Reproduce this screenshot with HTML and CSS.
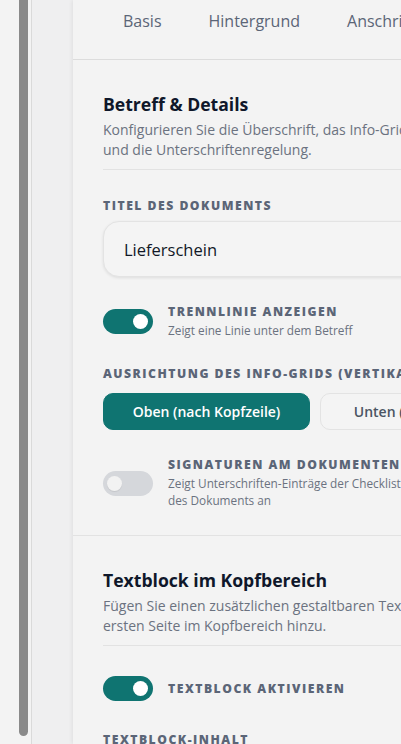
FILE: index.html
```html
<!DOCTYPE html>
<html lang="de">
<head>
<meta charset="utf-8">
<title>Betreff &amp; Details</title>
<link rel="stylesheet" href="styles.css">
</head>
<body>
<div class="app">
  <div class="rail"><div class="thumb"></div></div>
  <div class="gutter"></div>
  <main class="panel">
    <nav class="tabs">
      <span class="tab">Basis</span>
      <span class="tab">Hintergrund</span>
      <span class="tab">Anschrift</span>
    </nav>
    <section class="section section--bordered">
      <header class="section-head">
        <h2 class="section-title">Betreff &amp; Details</h2>
        <p class="section-desc">Konfigurieren Sie die Überschrift, das Info-Grid<br>und die Unterschriftenregelung.</p>
      </header>
      <div class="section-body">
        <div class="field">
          <div class="label">Titel des Dokuments</div>
          <div class="input">Lieferschein</div>
        </div>
        <div class="toggle-row">
          <span class="toggle toggle--on"><span class="knob"></span></span>
          <div class="toggle-text">
            <div class="label">Trennlinie anzeigen</div>
            <div class="hint">Zeigt eine Linie unter dem Betreff</div>
          </div>
        </div>
        <div class="field field--seg">
          <div class="label">Ausrichtung des Info-Grids (vertikal)</div>
          <div class="segmented">
            <span class="seg seg--active">Oben (nach Kopfzeile)</span>
            <span class="seg">Unten (nach Tabelle)</span>
          </div>
        </div>
        <div class="toggle-row">
          <span class="toggle"><span class="knob"></span></span>
          <div class="toggle-text">
            <div class="label">Signaturen am Dokumentenende</div>
            <div class="hint">Zeigt Unterschriften-Einträge der Checkliste am Ende<br>des Dokuments an</div>
          </div>
        </div>
      </div>
    </section>
    <section class="section">
      <header class="section-head">
        <h2 class="section-title">Textblock im Kopfbereich</h2>
        <p class="section-desc">Fügen Sie einen zusätzlichen gestaltbaren Textblock auf der<br>ersten Seite im Kopfbereich hinzu.</p>
      </header>
      <div class="section-body">
        <div class="toggle-row toggle-row--single">
          <span class="toggle toggle--on"><span class="knob"></span></span>
          <div class="toggle-text">
            <div class="label">Textblock aktivieren</div>
          </div>
        </div>
        <div class="field">
          <div class="label">Textblock-Inhalt</div>
        </div>
      </div>
    </section>
  </main>
</div>
</body>
</html>
```
FILE: styles.css
```css
* { box-sizing: border-box; }
html, body { margin: 0; padding: 0; }
body {
  width: 401px;
  height: 744px;
  overflow: hidden;
  background: #f3f3f3;
  font-family: "Open Sans", "Noto Sans", sans-serif;
  color: #111827;
}
.app { display: flex; height: 744px; }
.rail {
  width: 32px;
  flex-shrink: 0;
  padding-left: 19px;
  border-right: 1px solid #dadada;
  background: #f3f3f3;
}
.thumb {
  width: 9px;
  height: 736px;
  background: #8a8a8a;
  border-radius: 0 0 5px 5px;
}
.gutter { width: 41px; flex-shrink: 0; background: #efeff0; }
.panel {
  width: 484px;
  flex-shrink: 0;
  background: #f3f3f3;
  box-shadow: -1px 0 4px rgba(0,0,0,0.07);
}
.tabs {
  height: 60px;
  display: flex;
  align-items: flex-start;
  gap: 47px;
  padding: 7px 0 0 50px;
  border-bottom: 1px solid #dcdcdc;
}
.tab {
  font-size: 16px;
  line-height: 28px;
  font-weight: 500;
  color: #5b6577;
  white-space: nowrap;
}
.section { padding: 32px 0 0 30px; }
.section--bordered { border-bottom: 1px solid #e2e2e2; }
.section-head {
  width: 424px;
  padding-bottom: 9px;
  border-bottom: 1px solid #e2e2e2;
}
.section-title {
  margin: 0 0 4px;
  font-size: 17.6px;
  line-height: 24px;
  font-weight: 700;
  color: #0f172a;
}
.section-desc {
  margin: 0;
  font-size: 14px;
  line-height: 20px;
  color: #6b7280;
  white-space: nowrap;
}
.section-body {
  width: 424px;
  display: flex;
  flex-direction: column;
  gap: 27px;
  padding: 28px 0 26px;
}
.label {
  font-size: 12.2px;
  line-height: 16px;
  font-weight: 800;
  letter-spacing: 1.5px;
  text-transform: uppercase;
  color: #5b6577;
  white-space: nowrap;
}
.field { display: flex; flex-direction: column; gap: 7px; }
.field--seg { gap: 11px; }
.input {
  height: 56px;
  display: flex;
  align-items: center;
  padding-left: 20px;
  border: 1px solid #e3e3e3;
  border-radius: 16px;
  background: #f4f4f4;
  box-shadow: 0 1px 3px rgba(0,0,0,0.09);
  font-size: 16.5px;
  color: #111827;
}
.segmented {
  display: grid;
  grid-template-columns: 1fr 1fr;
  gap: 10px;
}
.seg {
  height: 37px;
  display: flex;
  align-items: center;
  justify-content: center;
  border: 1px solid #e3e3e3;
  border-radius: 10px;
  background: #f4f4f4;
  font-size: 14px;
  font-weight: 600;
  color: #4b5563;
  white-space: nowrap;
}
.seg--active {
  background: #0f7471;
  border-color: #0f7471;
  color: #ffffff;
}
.toggle-row { display: flex; align-items: center; gap: 15px; }
.toggle-row--single { padding: 2px 0 4px; }
.toggle {
  width: 50px;
  height: 25px;
  flex-shrink: 0;
  border-radius: 13px;
  background: #d5d7db;
  display: flex;
  align-items: center;
  padding: 0 4px;
}
.knob {
  width: 15px;
  height: 15px;
  border-radius: 50%;
  background: #f2f2f2;
  box-shadow: 0 1px 1px rgba(0,0,0,0.08);
}
.toggle--on { background: #0f7471; justify-content: flex-end; padding: 0 5px; }
.toggle--on .knob { background: #ffffff; box-shadow: none; }
.hint {
  margin-top: 2px;
  font-size: 11.8px;
  line-height: 17px;
  color: #6b7280;
  white-space: nowrap;
}
```
